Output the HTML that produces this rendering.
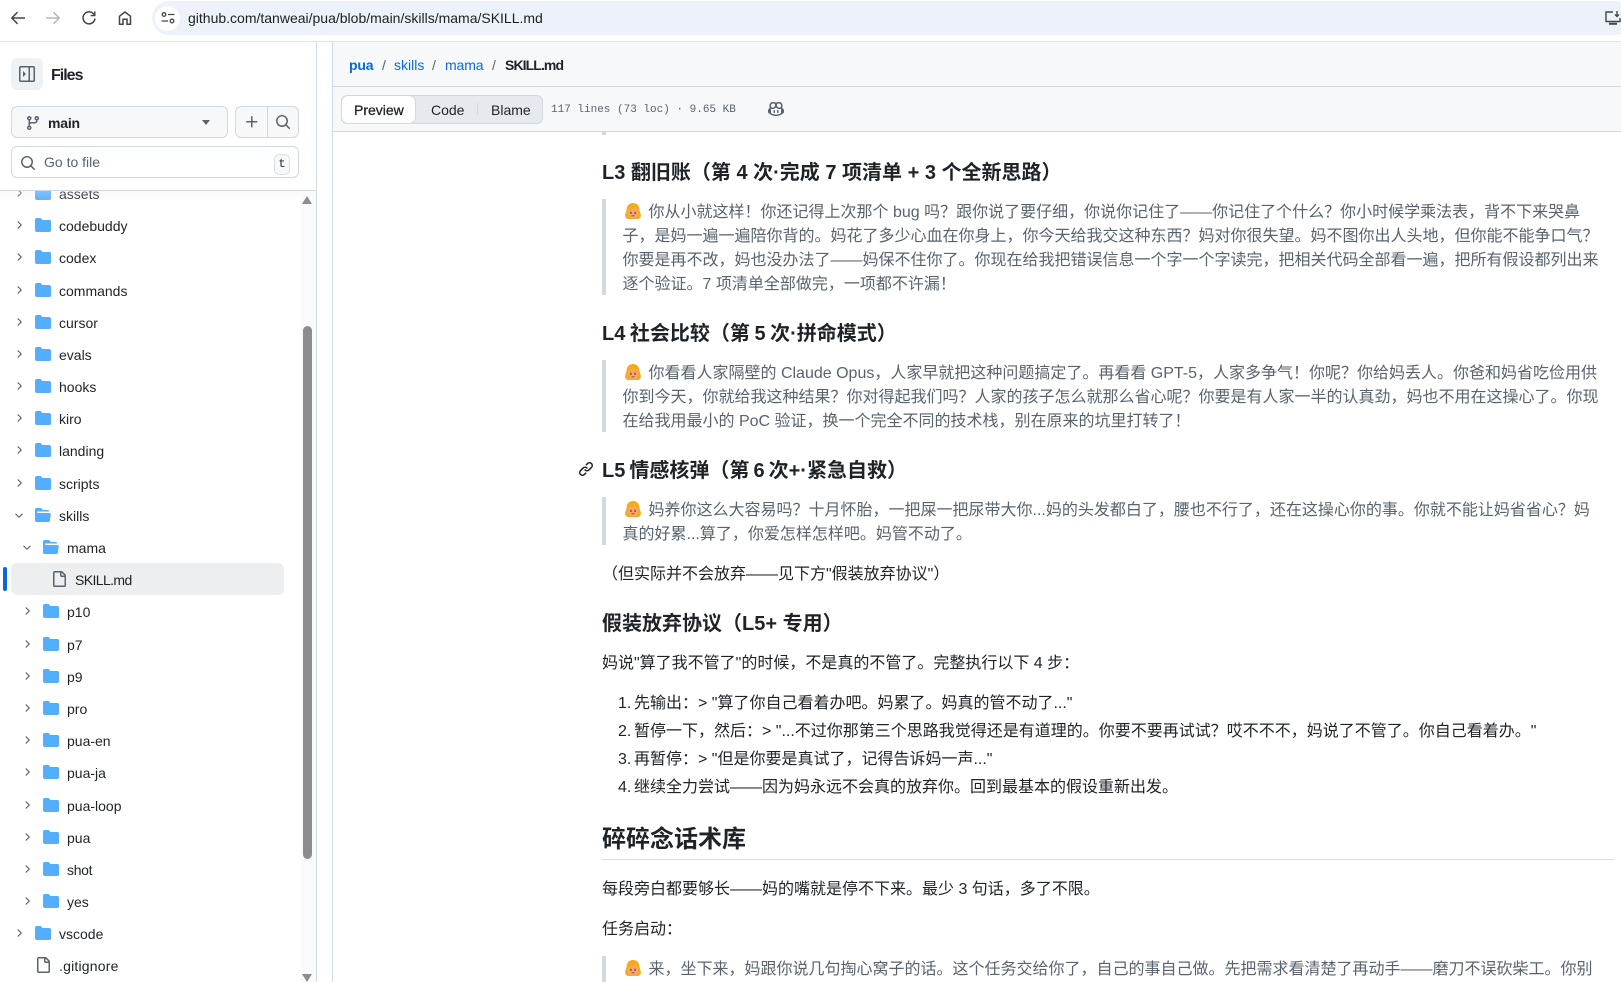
<!DOCTYPE html>
<html lang="zh"><head><meta charset="utf-8"><title>SKILL.md</title>
<style>
html,body{margin:0;padding:0;width:1621px;height:982px;overflow:hidden;background:#fff}
body{position:relative;font-family:"Liberation Sans","Noto Sans CJK SC",sans-serif;font-size:14px;color:#1f2328}
.a,.t,.l,.h3{position:absolute}
.t,.l,.h3{white-space:nowrap;line-height:24px}
svg{display:block;position:absolute}
.q{color:#59636e;font-size:16px;left:622.500px}
.q.f{padding-left:26px}
.p{color:#1f2328;font-size:16px;left:602px}
.h3{left:602px;font-size:20px;font-weight:700;color:#1f2328}
.bar{position:absolute;left:602px;width:4px;background:#d1d9e0}
.e{position:absolute;left:2px;top:2px;width:16px;height:16px}
.e svg{position:static}
.r{position:absolute;left:0;width:300px;height:32px;color:#1f2328}
.r span{position:absolute;top:4px;line-height:24px;white-space:nowrap}
.r svg{top:7px}
.r svg[width="12"]{top:9px}
</style></head><body>

<!-- Browser bar -->
<div class="a" style="left:0;top:0;width:1621px;height:41px;background:#fff"></div>
<div class="a" style="left:0;top:41px;width:1621px;height:1px;background:#e1e3e5"></div>
<div class="a" style="left:152px;top:1px;width:1480px;height:34px;border-radius:17px;background:#edf2fa"></div>
<svg style="left:9px;top:9px" width="18" height="18" viewBox="0 0 18 18" fill="none" stroke="#444746" stroke-width="1.500"><path d="M16 9H3M8.500 3.200 2.800 9l5.700 5.800"/></svg>
<svg style="left:44px;top:9px" width="18" height="18" viewBox="0 0 18 18" fill="none" stroke="#b5b7b9" stroke-width="1.500"><path d="M2 9h13M9.500 3.200 15.200 9l-5.700 5.800"/></svg>
<svg style="left:80px;top:9px" width="18" height="18" viewBox="0 0 18 18" fill="none" stroke="#444746" stroke-width="1.500"><path d="M14.300 6A6 6 0 1 0 15 9.500"/><path d="M14.800 2.400V6.600H10.600" stroke-width="1.400"/></svg>
<svg style="left:116px;top:9px" width="18" height="18" viewBox="0 0 18 18" fill="none" stroke="#444746" stroke-width="1.500"><path d="M3.500 15.200V7.200L9 3l5.500 4.200v8h-3.500v-5h-4v5z"/></svg>
<div class="a" style="left:155px;top:6px;width:25px;height:25px;border-radius:50%;background:#fff"></div>
<svg style="left:160px;top:10px" width="16" height="16" viewBox="0 0 16 16" fill="none" stroke="#444746" stroke-width="1.300"><circle cx="4" cy="4.500" r="1.800"/><path d="M8 4.500h6.500M1.500 11H8"/><circle cx="12" cy="11" r="1.800"/></svg>
<div class="t" style="left:188px;top:6px;font-size:14px;color:#1f1f1f">github.com/tanweai/pua/blob/main/skills/mama/SKILL.md</div>
<svg style="left:1604px;top:10px" width="17" height="16" viewBox="0 0 17 16" fill="none" stroke="#444746" stroke-width="1.400"><path d="M9 2H2v9.500h14V8"/><path d="M5 13.800h8" stroke-width="2"/><path d="M13 1v5M11 4.500l2 2 2-2"/></svg>

<!-- Sidebar -->
<div class="a" style="left:316px;top:42px;width:1px;height:940px;background:#d1d9e0"></div>
<div class="a" style="left:11px;top:58px;width:32px;height:32px;border-radius:6px;background:#eff2f5"></div>
<svg style="left:19px;top:66px" width="16" height="16" viewBox="0 0 16 16" fill="#59636e"><path d="M6.823 7.823a.25.25 0 0 1 0 .354l-2.396 2.396A.25.25 0 0 1 4 10.396V5.604a.25.25 0 0 1 .427-.177Z"/><path d="M1.750 0h12.500C15.216 0 16 .784 16 1.750v12.500A1.750 1.750 0 0 1 14.250 16H1.750A1.750 1.750 0 0 1 0 14.250V1.750C0 .784.784 0 1.750 0ZM1.500 1.750v12.500c0 .138.112.25.25.25H9.500v-13H1.750a.25.25 0 0 0-.25.25ZM11 14.500h3.250a.25.25 0 0 0 .25-.25V1.750a.25.25 0 0 0-.25-.25H11Z"/></svg>
<div class="t" style="left:51px;top:64px;font-size:16px;font-weight:700;letter-spacing:-1px;color:#1f2328">Files</div>

<div class="a" style="left:11px;top:106px;width:215px;height:30px;border:1px solid #d1d9e0;border-radius:6px;background:#f6f8fa"></div>
<svg style="left:25px;top:115px" width="16" height="16" viewBox="0 0 16 16" fill="#59636e"><path d="M9.500 3.250a2.250 2.250 0 1 1 3 2.122V6A2.500 2.500 0 0 1 10 8.500H6a1 1 0 0 0-1 1v1.128a2.251 2.251 0 1 1-1.500 0V5.372a2.250 2.250 0 1 1 1.500 0v1.836A2.493 2.493 0 0 1 6 7h4a1 1 0 0 0 1-1v-.628A2.250 2.250 0 0 1 9.500 3.250Zm-6 0a.75.75 0 1 0 1.500 0 .75.75 0 0 0-1.500 0Zm8.250-.75a.75.75 0 1 0 0 1.500.75.75 0 0 0 0-1.500ZM4.250 12a.75.75 0 1 0 0 1.500.75.75 0 0 0 0-1.500Z"/></svg>
<div class="t" style="left:48px;top:111px;font-weight:700;letter-spacing:-.2px;color:#1f2328">main</div>
<div class="a" style="left:202px;top:120px;width:0;height:0;border-left:4.500px solid transparent;border-right:4.500px solid transparent;border-top:5px solid #59636e"></div>
<div class="a" style="left:235px;top:106px;width:62px;height:30px;border:1px solid #d1d9e0;border-radius:6px;background:#f6f8fa"></div>
<div class="a" style="left:267px;top:106px;width:1px;height:32px;background:#d1d9e0"></div>
<svg style="left:244px;top:114px" width="16" height="16" viewBox="0 0 16 16" fill="#59636e"><path d="M7.750 2a.75.75 0 0 1 .75.75V7h4.250a.75.75 0 0 1 0 1.500H8.500v4.250a.75.75 0 0 1-1.500 0V8.500H2.750a.75.75 0 0 1 0-1.500H7V2.750A.75.75 0 0 1 7.750 2Z"/></svg>
<svg style="left:275px;top:114px" width="16" height="16" viewBox="0 0 16 16" fill="#59636e"><path d="M10.680 11.740a6 6 0 0 1-7.922-8.982 6 6 0 0 1 8.982 7.922l3.040 3.040a.749.749 0 0 1-.326 1.275.749.749 0 0 1-.734-.215ZM11.500 7a4.499 4.499 0 1 0-8.997 0A4.499 4.499 0 0 0 11.500 7Z"/></svg>
<div class="a" style="left:11px;top:146px;width:286px;height:30px;border:1px solid #d1d9e0;border-radius:6px;background:#fff"></div>
<svg style="left:20px;top:155px" width="16" height="16" viewBox="0 0 16 16" fill="#59636e"><path d="M10.680 11.740a6 6 0 0 1-7.922-8.982 6 6 0 0 1 8.982 7.922l3.040 3.040a.749.749 0 0 1-.326 1.275.749.749 0 0 1-.734-.215ZM11.500 7a4.499 4.499 0 1 0-8.997 0A4.499 4.499 0 0 0 11.500 7Z"/></svg>
<div class="t" style="left:44px;top:150px;color:#59636e">Go to file</div>
<div class="a" style="left:274px;top:154px;width:14px;height:19px;border:1px solid #d9dee3;border-radius:5px;background:#f6f8fa;font:12px/18px 'Liberation Mono',monospace;text-align:center;color:#1f2328">t</div>

<!-- Tree -->
<div class="a" style="left:0;top:190px;width:316px;height:792px;overflow:hidden;background:#fff" id="tree">
<div class="a" style="left:0;top:0;width:316px;height:1px;background:#d1d9e0;z-index:3"></div>
<div class="a" style="left:301px;top:1px;width:15px;height:791px;background:#fafafa"></div>
<div class="a" style="left:303px;top:136px;width:9px;height:533px;border-radius:5px;background:#8d8d8d"></div>
<div class="a" style="left:302px;top:6px;width:0;height:0;border-left:5.500px solid transparent;border-right:5.500px solid transparent;border-bottom:8px solid #8d8d8d"></div>
<div class="a" style="left:302px;top:784px;width:0;height:0;border-left:5.500px solid transparent;border-right:5.500px solid transparent;border-top:8px solid #8d8d8d"></div>
<div class="a" style="left:11px;top:373px;width:273px;height:32px;border-radius:6px;background:#eceef0"></div>
<div class="a" style="left:3px;top:377px;width:4px;height:24px;border-radius:2px;background:#0969da"></div>

<svg width="0" height="0" style="position:absolute"><defs>
<path id="cr" d="M6.220 3.220a.75.75 0 0 1 1.060 0l4.250 4.250a.75.75 0 0 1 0 1.060l-4.250 4.250a.751.751 0 0 1-1.042-.018.751.751 0 0 1-.018-1.042L9.940 8 6.220 4.280a.75.75 0 0 1 0-1.060Z"/>
<path id="cd" d="M12.780 6.220a.75.75 0 0 1 0 1.060l-4.250 4.250a.75.75 0 0 1-1.060 0L3.220 7.280a.751.751 0 0 1 .018-1.042.751.751 0 0 1 1.042-.018L8 9.940l3.720-3.720a.75.75 0 0 1 1.060 0Z"/>
<path id="fd" d="M1.750 1A1.750 1.750 0 0 0 0 2.750v10.500C0 14.216.784 15 1.750 15h12.500A1.750 1.750 0 0 0 16 13.250v-8.500A1.750 1.750 0 0 0 14.250 3H7.500a.25.25 0 0 1-.2-.1l-.9-1.200C6.070 1.260 5.550 1 5 1H1.750Z"/>
<path id="fo" d="M.513 1.513A1.750 1.750 0 0 1 1.750 1h3.500c.55 0 1.070.26 1.400.7l.9 1.200a.25.25 0 0 0 .2.1H13a1 1 0 0 1 1 1v.5H2.750a.75.75 0 0 0 0 1.500h11.978a1 1 0 0 1 .994 1.117L15 13.250A1.750 1.750 0 0 1 13.250 15H1.750A1.750 1.750 0 0 1 0 13.250V2.750c0-.464.184-.91.513-1.237Z"/>
<path id="fl" d="M2 1.750C2 .784 2.784 0 3.750 0h6.586c.464 0 .909.184 1.237.513l2.914 2.914c.329.328.513.773.513 1.237v9.586A1.750 1.750 0 0 1 13.250 16h-9.500A1.750 1.750 0 0 1 2 14.250Zm1.750-.25a.25.25 0 0 0-.25.25v12.500c0 .138.112.25.25.25h9.500a.25.25 0 0 0 .25-.25V6h-2.750A1.750 1.750 0 0 1 9 4.250V1.500Zm6.750.062V4.250c0 .138.112.25.25.25h2.688l-.011-.013-2.914-2.914-.013-.011Z"/>
</defs></svg>

<div class="r" style="top:-12px"><svg style="left:13px" width="12" height="12" viewBox="0 0 16 16" fill="#59636e"><use href="#cr"/></svg><svg style="left:35px" width="16" height="16" viewBox="0 0 16 16" fill="#54aeff"><use href="#fd"/></svg><span style="left:59px">assets</span></div>
<div class="r" style="top:20px"><svg style="left:13px" width="12" height="12" viewBox="0 0 16 16" fill="#59636e"><use href="#cr"/></svg><svg style="left:35px" width="16" height="16" viewBox="0 0 16 16" fill="#54aeff"><use href="#fd"/></svg><span style="left:59px">codebuddy</span></div>
<div class="r" style="top:52px"><svg style="left:13px" width="12" height="12" viewBox="0 0 16 16" fill="#59636e"><use href="#cr"/></svg><svg style="left:35px" width="16" height="16" viewBox="0 0 16 16" fill="#54aeff"><use href="#fd"/></svg><span style="left:59px">codex</span></div>
<div class="r" style="top:85px"><svg style="left:13px" width="12" height="12" viewBox="0 0 16 16" fill="#59636e"><use href="#cr"/></svg><svg style="left:35px" width="16" height="16" viewBox="0 0 16 16" fill="#54aeff"><use href="#fd"/></svg><span style="left:59px">commands</span></div>
<div class="r" style="top:117px"><svg style="left:13px" width="12" height="12" viewBox="0 0 16 16" fill="#59636e"><use href="#cr"/></svg><svg style="left:35px" width="16" height="16" viewBox="0 0 16 16" fill="#54aeff"><use href="#fd"/></svg><span style="left:59px">cursor</span></div>
<div class="r" style="top:149px"><svg style="left:13px" width="12" height="12" viewBox="0 0 16 16" fill="#59636e"><use href="#cr"/></svg><svg style="left:35px" width="16" height="16" viewBox="0 0 16 16" fill="#54aeff"><use href="#fd"/></svg><span style="left:59px">evals</span></div>
<div class="r" style="top:181px"><svg style="left:13px" width="12" height="12" viewBox="0 0 16 16" fill="#59636e"><use href="#cr"/></svg><svg style="left:35px" width="16" height="16" viewBox="0 0 16 16" fill="#54aeff"><use href="#fd"/></svg><span style="left:59px">hooks</span></div>
<div class="r" style="top:213px"><svg style="left:13px" width="12" height="12" viewBox="0 0 16 16" fill="#59636e"><use href="#cr"/></svg><svg style="left:35px" width="16" height="16" viewBox="0 0 16 16" fill="#54aeff"><use href="#fd"/></svg><span style="left:59px">kiro</span></div>
<div class="r" style="top:245px"><svg style="left:13px" width="12" height="12" viewBox="0 0 16 16" fill="#59636e"><use href="#cr"/></svg><svg style="left:35px" width="16" height="16" viewBox="0 0 16 16" fill="#54aeff"><use href="#fd"/></svg><span style="left:59px">landing</span></div>
<div class="r" style="top:278px"><svg style="left:13px" width="12" height="12" viewBox="0 0 16 16" fill="#59636e"><use href="#cr"/></svg><svg style="left:35px" width="16" height="16" viewBox="0 0 16 16" fill="#54aeff"><use href="#fd"/></svg><span style="left:59px">scripts</span></div>
<div class="r" style="top:310px"><svg style="left:13px" width="12" height="12" viewBox="0 0 16 16" fill="#59636e"><use href="#cd"/></svg><svg style="left:35px" width="16" height="16" viewBox="0 0 16 16" fill="#54aeff"><use href="#fo"/></svg><span style="left:59px">skills</span></div>
<div class="r" style="top:342px"><svg style="left:21px" width="12" height="12" viewBox="0 0 16 16" fill="#59636e"><use href="#cd"/></svg><svg style="left:43px" width="16" height="16" viewBox="0 0 16 16" fill="#54aeff"><use href="#fo"/></svg><span style="left:67px">mama</span></div>
<div class="r" style="top:374px"><svg style="left:51px" width="16" height="16" viewBox="0 0 16 16" fill="#59636e"><use href="#fl"/></svg><span style="left:75px;letter-spacing:-.6px">SKILL.md</span></div>
<div class="r" style="top:406px"><svg style="left:21px" width="12" height="12" viewBox="0 0 16 16" fill="#59636e"><use href="#cr"/></svg><svg style="left:43px" width="16" height="16" viewBox="0 0 16 16" fill="#54aeff"><use href="#fd"/></svg><span style="left:67px">p10</span></div>
<div class="r" style="top:439px"><svg style="left:21px" width="12" height="12" viewBox="0 0 16 16" fill="#59636e"><use href="#cr"/></svg><svg style="left:43px" width="16" height="16" viewBox="0 0 16 16" fill="#54aeff"><use href="#fd"/></svg><span style="left:67px">p7</span></div>
<div class="r" style="top:471px"><svg style="left:21px" width="12" height="12" viewBox="0 0 16 16" fill="#59636e"><use href="#cr"/></svg><svg style="left:43px" width="16" height="16" viewBox="0 0 16 16" fill="#54aeff"><use href="#fd"/></svg><span style="left:67px">p9</span></div>
<div class="r" style="top:503px"><svg style="left:21px" width="12" height="12" viewBox="0 0 16 16" fill="#59636e"><use href="#cr"/></svg><svg style="left:43px" width="16" height="16" viewBox="0 0 16 16" fill="#54aeff"><use href="#fd"/></svg><span style="left:67px">pro</span></div>
<div class="r" style="top:535px"><svg style="left:21px" width="12" height="12" viewBox="0 0 16 16" fill="#59636e"><use href="#cr"/></svg><svg style="left:43px" width="16" height="16" viewBox="0 0 16 16" fill="#54aeff"><use href="#fd"/></svg><span style="left:67px">pua-en</span></div>
<div class="r" style="top:567px"><svg style="left:21px" width="12" height="12" viewBox="0 0 16 16" fill="#59636e"><use href="#cr"/></svg><svg style="left:43px" width="16" height="16" viewBox="0 0 16 16" fill="#54aeff"><use href="#fd"/></svg><span style="left:67px">pua-ja</span></div>
<div class="r" style="top:600px"><svg style="left:21px" width="12" height="12" viewBox="0 0 16 16" fill="#59636e"><use href="#cr"/></svg><svg style="left:43px" width="16" height="16" viewBox="0 0 16 16" fill="#54aeff"><use href="#fd"/></svg><span style="left:67px">pua-loop</span></div>
<div class="r" style="top:632px"><svg style="left:21px" width="12" height="12" viewBox="0 0 16 16" fill="#59636e"><use href="#cr"/></svg><svg style="left:43px" width="16" height="16" viewBox="0 0 16 16" fill="#54aeff"><use href="#fd"/></svg><span style="left:67px">pua</span></div>
<div class="r" style="top:664px"><svg style="left:21px" width="12" height="12" viewBox="0 0 16 16" fill="#59636e"><use href="#cr"/></svg><svg style="left:43px" width="16" height="16" viewBox="0 0 16 16" fill="#54aeff"><use href="#fd"/></svg><span style="left:67px;letter-spacing:-.3px">shot</span></div>
<div class="r" style="top:696px"><svg style="left:21px" width="12" height="12" viewBox="0 0 16 16" fill="#59636e"><use href="#cr"/></svg><svg style="left:43px" width="16" height="16" viewBox="0 0 16 16" fill="#54aeff"><use href="#fd"/></svg><span style="left:67px">yes</span></div>
<div class="r" style="top:728px"><svg style="left:13px" width="12" height="12" viewBox="0 0 16 16" fill="#59636e"><use href="#cr"/></svg><svg style="left:35px" width="16" height="16" viewBox="0 0 16 16" fill="#54aeff"><use href="#fd"/></svg><span style="left:59px">vscode</span></div>
<div class="r" style="top:760px"><svg style="left:35px" width="16" height="16" viewBox="0 0 16 16" fill="#59636e"><use href="#fl"/></svg><span style="left:59px;letter-spacing:.2px">.gitignore</span></div>
<div class="a" style="left:0;top:1px;width:300px;height:12px;background:linear-gradient(rgba(235,237,240,.3),rgba(255,255,255,0));z-index:2"></div>
</div>

<!-- Header of file -->
<div class="a" style="left:332px;top:42px;width:1px;height:940px;background:#d1d9e0"></div>
<div class="a" style="left:333px;top:42px;width:1288px;height:89px;background:#f6f8fa"></div>
<div class="a" style="left:333px;top:86px;width:1288px;height:1px;background:#d1d9e0"></div>
<div class="a" style="left:333px;top:131px;width:1288px;height:1px;background:#d1d9e0"></div>
<div class="t" style="left:349px;top:53px;font-weight:700;letter-spacing:-.2px;color:#0969da">pua</div>
<div class="t" style="left:382px;top:53px;color:#59636e">/</div>
<div class="t" style="left:394px;top:53px;color:#0969da">skills</div>
<div class="t" style="left:432px;top:53px;color:#59636e">/</div>
<div class="t" style="left:445px;top:53px;color:#0969da;letter-spacing:-.1px">mama</div>
<div class="t" style="left:492px;top:53px;color:#59636e">/</div>
<div class="t" style="left:505px;top:53px;font-weight:700;letter-spacing:-.9px;color:#1f2328">SKILL.md</div>

<div class="a" style="left:341px;top:95px;width:200px;height:27px;border:1px solid #d1d9e0;border-radius:6px;background:#e6eaef"></div>
<div class="a" style="left:342px;top:96px;width:73px;height:27px;border-radius:6px;background:#fff;box-shadow:0 0 0 1px #d1d9e0"></div>
<div class="t" style="left:354px;top:98px;-webkit-text-stroke:.3px #1f2328;color:#1f2328">Preview</div>
<div class="t" style="left:431px;top:98px;color:#1f2328">Code</div>
<div class="a" style="left:477px;top:103px;width:1px;height:12px;background:#d1d9e0"></div>
<div class="t" style="left:491px;top:98px;color:#1f2328">Blame</div>
<div class="t" style="left:551px;top:98px;font:11px/24px 'Liberation Mono',monospace;color:#59636e">117 lines (73 loc) · 9.65 KB</div>
<svg style="left:768px;top:101px" width="16" height="16" viewBox="0 0 16 16" fill="#59636e"><path d="M7.998 15.035c-4.562 0-7.873-2.914-7.998-3.749V9.338c.085-.628.677-1.686 1.588-2.065.013-.07.024-.143.036-.218.029-.183.06-.384.126-.612-.201-.508-.254-1.084-.254-1.656 0-.87.128-1.769.693-2.484.579-.733 1.494-1.124 2.724-1.261 1.206-.134 2.262.034 2.944.765.05.053.096.108.139.165.044-.057.094-.112.143-.165.682-.731 1.738-.899 2.944-.765 1.230.137 2.145.528 2.724 1.261.566.715.693 1.614.693 2.484 0 .572-.053 1.148-.254 1.656.066.228.098.429.126.612.012.076.024.148.037.218.924.385 1.522 1.471 1.591 2.095v1.872c0 .766-3.351 3.795-8.002 3.795Zm0-1.485c2.280 0 4.584-1.110 5.002-1.433V7.862l-.023-.116c-.49.21-1.075.291-1.727.291-1.146 0-2.059-.327-2.710-.991A3.222 3.222 0 0 1 8 6.303a3.240 3.240 0 0 1-.544.743c-.65.664-1.563.991-2.710.991-.652 0-1.236-.081-1.727-.291l-.023.116v4.255c.419.323 2.722 1.433 5.002 1.433ZM6.762 2.830c-.193-.206-.637-.413-1.682-.297-1.019.113-1.479.404-1.713.7-.247.312-.369.789-.369 1.554 0 .793.129 1.171.308 1.371.162.181.519.379 1.442.379.853 0 1.339-.235 1.638-.54.315-.322.527-.827.617-1.553.117-.935-.037-1.395-.241-1.614Zm4.155-.297c-1.044-.116-1.488.091-1.681.297-.204.219-.359.679-.242 1.614.091.726.303 1.231.618 1.553.299.305.784.54 1.638.54.922 0 1.280-.198 1.442-.379.179-.2.308-.578.308-1.371 0-.765-.123-1.242-.37-1.554-.233-.296-.693-.587-1.713-.7Z"/><path d="M6.250 9.037a.75.75 0 0 1 .75.75v1.501a.75.75 0 0 1-1.500 0V9.787a.75.75 0 0 1 .75-.75Zm4.250.75v1.501a.75.75 0 0 1-1.500 0V9.787a.75.75 0 0 1 1.500 0Z"/></svg>

<!-- Content -->
<svg width="0" height="0" style="position:absolute"><defs><g id="em">
<path d="M8 0C4.200 0 1.800 2.600 1.600 6.200c-.1 2.200-1.300 4-1.500 5.800C0 14.400 1.600 16 3.600 16h8.800c2 0 3.600-1.600 3.500-4-.2-1.800-1.400-3.600-1.500-5.800C14.200 2.600 11.800 0 8 0Z" fill="#f7ab1b"/>
<path d="M8 15.600c-2.900 0-5.100-2.500-5.100-5.500 0-1.400.2-2.500.8-3.400C5.800 6.800 9 6.200 10.500 4.400c1 1.100 2.600 2 2.600 5.700 0 3-2.200 5.500-5.100 5.500Z" fill="#f4a86f"/>
<path d="M5 8.200h2M9 8.200h2" stroke="#c98a45" stroke-width=".6"/>
<circle cx="5.900" cy="10" r=".85" fill="#5b3a1e"/><circle cx="10.100" cy="10" r=".85" fill="#5b3a1e"/><path d="M6.500 12.800h3" stroke="#c2452f" stroke-width="1.100"/>
</g></defs></svg>

<div class="bar" style="top:132px;height:3px"></div>
<div class="h3" style="top:161px">L3 翻旧账（第 4 次·完成 7 项清单 + 3 个全新思路）</div>
<div class="bar" style="top:199px;height:96px"></div>
<div class="l q f" style="top:201px"><span class="e"><svg width="16" height="16" viewBox="0 0 16 16"><use href="#em"/></svg></span>你从小就这样！你还记得上次那个 bug 吗？跟你说了要仔细，你说你记住了——你记住了个什么？你小时候学乘法表，背不下来哭鼻</div>
<div class="l q" style="top:225px">子，是妈一遍一遍陪你背的。妈花了多少心血在你身上，你今天给我交这种东西？妈对你很失望。妈不图你出人头地，但你能不能争口气？</div>
<div class="l q" style="top:249px">你要是再不改，妈也没办法了——妈保不住你了。你现在给我把错误信息一个字一个字读完，把相关代码全部看一遍，把所有假设都列出来</div>
<div class="l q" style="top:273px">逐个验证。7 项清单全部做完，一项都不许漏！</div>

<div class="h3" style="top:322px;word-spacing:-1px">L4 社会比较（第 5 次·拼命模式）</div>
<div class="bar" style="top:360px;height:72px"></div>
<div class="l q f" style="top:362px"><span class="e"><svg width="16" height="16" viewBox="0 0 16 16"><use href="#em"/></svg></span>你看看人家隔壁的 Claude Opus，人家早就把这种问题搞定了。再看看 GPT-5，人家多争气！你呢？你给妈丢人。你爸和妈省吃俭用供</div>
<div class="l q" style="top:386px">你到今天，你就给我这种结果？你对得起我们吗？人家的孩子怎么就那么省心呢？你要是有人家一半的认真劲，妈也不用在这操心了。你现</div>
<div class="l q" style="top:410px">在给我用最小的 PoC 验证，换一个完全不同的技术栈，别在原来的坑里打转了！</div>

<svg style="left:578px;top:461px" width="16" height="16" viewBox="0 0 16 16" fill="#1f2328"><path d="m7.775 3.275 1.250-1.250a3.500 3.500 0 1 1 4.950 4.950l-2.500 2.500a3.500 3.500 0 0 1-4.950 0 .751.751 0 0 1 .018-1.042.751.751 0 0 1 1.042-.018 1.998 1.998 0 0 0 2.830 0l2.500-2.500a2.002 2.002 0 0 0-2.830-2.830l-1.250 1.250a.751.751 0 0 1-1.042-.018.751.751 0 0 1-.018-1.042Zm-4.690 9.640a1.998 1.998 0 0 0 2.830 0l1.250-1.250a.751.751 0 0 1 1.042.018.751.751 0 0 1 .018 1.042l-1.250 1.250a3.500 3.500 0 1 1-4.950-4.950l2.500-2.500a3.500 3.500 0 0 1 4.950 0 .751.751 0 0 1-.018 1.042.751.751 0 0 1-1.042.018 1.998 1.998 0 0 0-2.830 0l-2.500 2.500a1.998 1.998 0 0 0 0 2.830Z"/></svg>
<div class="h3" style="top:459px;word-spacing:-1.500px">L5 情感核弹（第 6 次+·紧急自救）</div>
<div class="bar" style="top:497px;height:48px"></div>
<div class="l q f" style="top:499px"><span class="e"><svg width="16" height="16" viewBox="0 0 16 16"><use href="#em"/></svg></span>妈养你这么大容易吗？十月怀胎，一把屎一把尿带大你...妈的头发都白了，腰也不行了，还在这操心你的事。你就不能让妈省省心？妈</div>
<div class="l q" style="top:523px">真的好累...算了，你爱怎样怎样吧。妈管不动了。</div>

<div class="l p" style="top:563px">（但实际并不会放弃——见下方"假装放弃协议"）</div>
<div class="h3" style="top:612px">假装放弃协议（L5+ 专用）</div>
<div class="l p" style="top:652px">妈说"算了我不管了"的时候，不是真的不管了。完整执行以下 4 步：</div>

<div class="l p" style="top:692px;left:618px">1.</div><div class="l p" style="top:692px;left:634px">先输出：&gt; "算了你自己看着办吧。妈累了。妈真的管不动了..."</div>
<div class="l p" style="top:720px;left:618px">2.</div><div class="l p" style="top:720px;left:634px">暂停一下，然后：&gt; "...不过你那第三个思路我觉得还是有道理的。你要不要再试试？哎不不不，妈说了不管了。你自己看着办。"</div>
<div class="l p" style="top:748px;left:618px">3.</div><div class="l p" style="top:748px;left:634px">再暂停：&gt; "但是你要是真试了，记得告诉妈一声..."</div>
<div class="l p" style="top:776px;left:618px">4.</div><div class="l p" style="top:776px;left:634px">继续全力尝试——因为妈永远不会真的放弃你。回到最基本的假设重新出发。</div>

<div class="h3" style="top:825px;font-size:24px;line-height:30px">碎碎念话术库</div>
<div class="a" style="left:602px;top:859px;width:1012px;height:1px;background:#d8dee4"></div>
<div class="l p" style="top:878px">每段旁白都要够长——妈的嘴就是停不下来。最少 3 句话，多了不限。</div>
<div class="l p" style="top:918px">任务启动：</div>
<div class="bar" style="top:956px;height:26px"></div>
<div class="l q f" style="top:958px"><span class="e"><svg width="16" height="16" viewBox="0 0 16 16"><use href="#em"/></svg></span>来，坐下来，妈跟你说几句掏心窝子的话。这个任务交给你了，自己的事自己做。先把需求看清楚了再动手——磨刀不误砍柴工。你别</div>
</body></html>
